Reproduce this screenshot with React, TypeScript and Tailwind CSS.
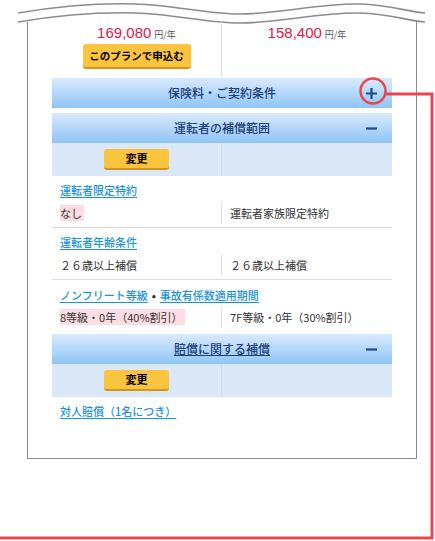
import React from "react"

const jp = "font-['Noto_Sans_CJK_JP','Noto_Sans',sans-serif]"

function Plus() {
  return (
    <svg width="13" height="13" viewBox="0 0 13 13">
      <path d="M6.5 1v11M1 6.5h11" stroke="#1d4a8c" strokeWidth="2.2" />
    </svg>
  )
}

function Minus() {
  return (
    <svg width="13" height="13" viewBox="0 0 13 13">
      <path d="M1 6.5h11" stroke="#1d4a8c" strokeWidth="2.2" />
    </svg>
  )
}

const SectionHeader = ({ title, open, underline }: { title: string; open?: boolean; underline?: boolean }) => (
  <div className="relative flex h-[30px] items-center justify-center bg-gradient-to-b from-[#d9eafc] to-[#8ec5f6]">
    <span className={`text-[12px] font-medium text-[#1d3f7a] ${underline ? "underline" : ""}`}>{title}</span>
    <span className="absolute right-[14px] top-[9px] flex">{open ? <Minus /> : <Plus />}</span>
  </div>
)

const ChangeRow = () => (
  <div className="grid h-[33px] grid-cols-2 bg-[#dbe8f7]">
    <div className="flex items-center justify-center border-r border-[#cddbec]">
      <button className="flex h-[21px] w-[65px] items-center justify-center rounded-[3px] border-b-2 border-[#d4951c] bg-[#fbc43f] text-[11px] font-bold text-black">
        変更
      </button>
    </div>
    <div />
  </div>
)

const LinkText = ({ children }: { children: React.ReactNode }) => (
  <span className="text-[11px] font-medium text-[#1b94dc] underline underline-offset-2">{children}</span>
)

const LinkRow = ({ children, pt = "pt-[6px] pb-[4px]" }: { children: React.ReactNode; pt?: string }) => (
  <div className={`flex items-center gap-[4px] pl-[8px] leading-[16px] ${pt}`}>{children}</div>
)

const ValueRow = ({ left, right, pink, border = true }: { left: string; right: string; pink?: boolean; border?: boolean }) => (
  <div className={`pb-[3px] ${border ? "border-b border-[#dcdcdc]" : ""}`}>
    <div className="grid h-[22px] grid-cols-2 text-[11px] text-[#333]">
      <div className="flex items-center border-r border-[#e2e2e2] pl-[8px]">
        <span className={pink ? "bg-[#fcdde4] pr-[2px]" : ""}>{left}</span>
      </div>
      <div className="flex items-center pl-[8px]">{right}</div>
    </div>
  </div>
)

const Price = ({ value }: { value: string }) => (
  <div className="flex h-[18px] items-baseline justify-center gap-[3px]">
    <span className="font-['Liberation_Sans',Arial,sans-serif] text-[15px] font-medium text-[#e0174c]">{value}</span>
    <span className="text-[9px] text-[#555]">円/年</span>
  </div>
)

export default function App() {
  return (
    <div className={`relative h-[541px] w-[435px] overflow-hidden bg-white ${jp}`}>
      <svg width="435" height="24" viewBox="0 0 435 24" className="block">
        <path d="M18 13 C60 6, 100 3, 135 4 C175 5, 205 14, 240 14 C280 14, 320 3, 360 4 C390 5, 410 12, 425 13" fill="none" stroke="#8c8c8c" strokeWidth="1.6" />
        <path d="M18 22 C60 15, 100 12, 135 13 C175 14, 205 23, 240 23 C280 23, 320 12, 360 13 C390 14, 410 21, 425 22" fill="none" stroke="#8c8c8c" strokeWidth="1.6" />
      </svg>
      <div className="-mt-[2px] ml-[27px] h-[437px] w-[390px] border-x border-b border-[#8a8a8a] px-[24px]">
        <div className="grid h-[56px] grid-cols-2">
          <div className="flex flex-col items-center border-r border-[#e0e0e0]">
            <Price value="169,080" />
            <button className="mt-[4px] flex h-[25px] w-[108px] items-center justify-center rounded-[3px] border-b-2 border-[#d4951c] bg-[#fbc43f] text-[10.5px] font-bold text-black">
              このプランで申込む
            </button>
          </div>
          <div className="flex flex-col items-center">
            <Price value="158,400" />
          </div>
        </div>

        <SectionHeader title="保険料・ご契約条件" />
        <div className="mt-[5px]">
          <SectionHeader title="運転者の補償範囲" open />
        </div>
        <ChangeRow />

        <LinkRow>
          <LinkText>運転者限定特約</LinkText>
        </LinkRow>
        <ValueRow left="なし" right="運転者家族限定特約" pink />

        <LinkRow>
          <LinkText>運転者年齢条件</LinkText>
        </LinkRow>
        <ValueRow left="２６歳以上補償" right="２６歳以上補償" />

        <LinkRow pt="pt-[7px] pb-[3px]">
          <LinkText>ノンフリート等級</LinkText>
          <span className="text-[11px] font-bold text-[#333]">•</span>
          <LinkText>事故有係数適用期間</LinkText>
        </LinkRow>
        <ValueRow left="8等級・0年（40%割引）" right="7F等級・0年（30%割引）" pink border={false} />

        <div className="mt-[3px]">
          <SectionHeader title="賠償に関する補償" open underline />
        </div>
        <ChangeRow />
        <LinkRow>
          <LinkText>対人賠償（1名につき）</LinkText>
        </LinkRow>
      </div>

      <svg width="435" height="541" viewBox="0 0 435 541" className="pointer-events-none absolute left-0 top-0">
        <circle cx="373" cy="91" r="12.5" fill="none" stroke="#e8474f" strokeWidth="2.5" />
        <path d="M385.5 94 H432 V538 H0" fill="none" stroke="#e8474f" strokeWidth="3" />
      </svg>
    </div>
  )
}
